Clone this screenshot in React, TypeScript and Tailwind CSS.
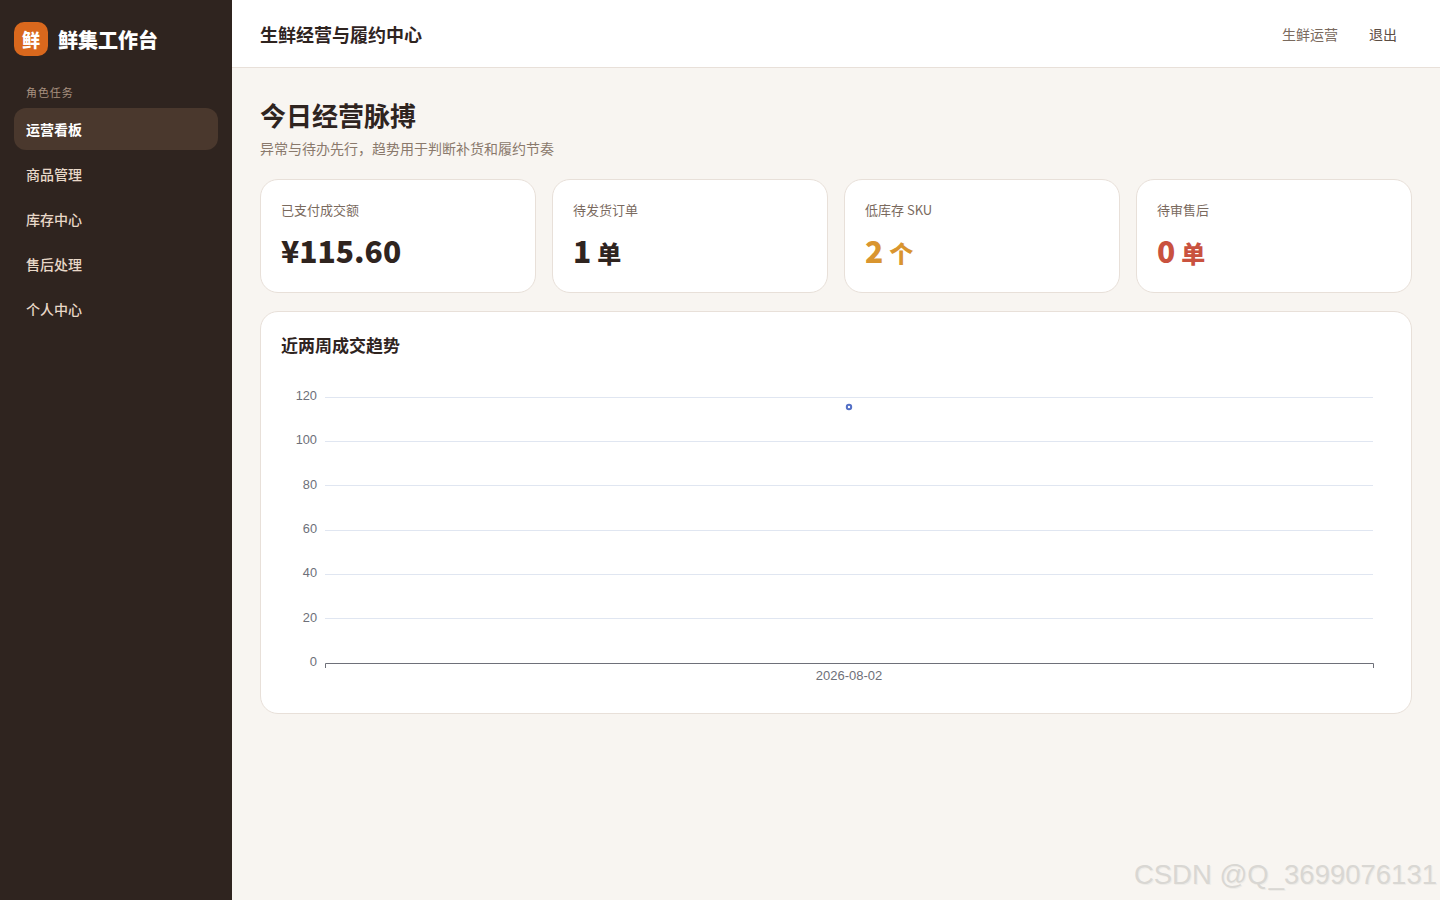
const fontStack = '[font-family:"Noto_Sans_CJK_SC","Noto_Sans",sans-serif]';

const navItems = ["运营看板", "商品管理", "库存中心", "售后处理", "个人中心"];

const stats = [
  { label: "已支付成交额", value: "¥115.60", unit: "", color: "text-[#2f241f]" },
  { label: "待发货订单", value: "1", unit: "单", color: "text-[#2f241f]" },
  { label: "低库存 SKU", value: "2", unit: "个", color: "text-[#d9952f]" },
  { label: "待审售后", value: "0", unit: "单", color: "text-[#c9523f]" },
];

const gridLines = [
  { label: "120", y: 26.5, textY: 28.5 },
  { label: "100", y: 70.5, textY: 72.5 },
  { label: "80", y: 114.5, textY: 117.5 },
  { label: "60", y: 159.5, textY: 161.5 },
  { label: "40", y: 203.5, textY: 205.5 },
  { label: "20", y: 247.5, textY: 250.5 },
];

function TrendChart() {
  return (
    <svg width="1110" height="320" viewBox="0 0 1110 320" className="mt-[13px] block">
      {gridLines.map((line) => (
        <g key={line.label}>
          <line x1="44" x2="1092" y1={line.y} y2={line.y} stroke="#e0e6f1" />
          <text x="36" y={line.textY} textAnchor="end" fontSize="12.8" fontFamily="Liberation Sans, sans-serif" fill="#6e7079">
            {line.label}
          </text>
        </g>
      ))}
      <text x="36" y="295" textAnchor="end" fontSize="13" fontFamily="Liberation Sans, sans-serif" fill="#6e7079">
        0
      </text>
      <path d="M44.5 297V292.5H1092.5V297" fill="none" stroke="#6e7079" />
      <text x="568" y="309" textAnchor="middle" fontSize="13" fontFamily="Liberation Sans, sans-serif" fill="#6e7079">
        2026-08-02
      </text>
      <circle cx="568" cy="36" r="2.2" fill="#fff" stroke="#5470c6" strokeWidth="2" />
    </svg>
  );
}

export default function App() {
  return (
    <div className={`relative flex h-[900px] w-[1440px] overflow-hidden bg-[#f8f5f1] ${fontStack}`}>
      <aside className="flex w-[232px] shrink-0 flex-col bg-[#2f241f] px-[14px] pt-[22px]">
        <div className="flex items-center gap-[10px]">
          <div className="flex h-[34px] w-[34px] items-center justify-center rounded-[10px] bg-[#d9681d] text-lg font-extrabold text-white">
            鲜
          </div>
          <span className="relative top-px text-xl font-extrabold text-white">鲜集工作台</span>
        </div>
        <div className="mt-[21px] mb-px px-3 text-[11px] leading-[30px] tracking-[0.88px] text-[#a8917f]">角色任务</div>
        <nav className="flex flex-col gap-[3px]">
          {navItems.map((item, i) => (
            <div
              key={item}
              className={
                i === 0
                  ? "flex h-[42px] items-center rounded-xl bg-[#4a382d] px-3 text-sm font-bold text-white"
                  : "flex h-[42px] items-center rounded-xl px-3 text-sm font-medium text-[#e8d8c8]"
              }
            >
              {item}
            </div>
          ))}
        </nav>
      </aside>

      <div className="flex min-w-0 flex-1 flex-col">
        <header className="flex h-[68px] items-center justify-between border-b border-[#e8e0d9] bg-white pl-7 pr-[43px]">
          <span className="text-lg font-bold text-[#2f241f]">生鲜经营与履约中心</span>
          <div className="flex items-center gap-[31px] text-sm">
            <span className="text-[#7a6a5e]">生鲜运营</span>
            <span className="text-[#5c4d43]">退出</span>
          </div>
        </header>

        <main className="flex flex-col px-7 pt-[27px]">
          <h1 className="text-[26px] leading-[40px] font-bold text-[#2f241f]">今日经营脉搏</h1>
          <p className="mt-[3px] text-sm leading-[20px] text-[#8a796c]">异常与待办先行，趋势用于判断补货和履约节奏</p>

          <div className="mt-[21px] grid grid-cols-4 gap-4">
            {stats.map((stat) => (
              <div key={stat.label} className="h-[114px] rounded-[18px] border border-[#e8e0d9] bg-white px-5 pt-5">
                <div className="text-[13px] leading-[20px] text-[#7a6a5e]">{stat.label}</div>
                <div className={`mt-[8px] flex items-baseline gap-[6px] text-[30px] leading-[44px] font-black ${stat.color}`}>
                  <span>{stat.value}</span>
                  {stat.unit && <span className="text-2xl">{stat.unit}</span>}
                </div>
              </div>
            ))}
          </div>

          <section className="mt-[18px] h-[403px] rounded-[18px] border border-[#e8e0d9] bg-white px-5 pt-5">
            <h2 className="text-[17px] leading-[26px] font-bold text-[#2f241f]">近两周成交趋势</h2>
            <TrendChart />
          </section>
        </main>
      </div>

      <div className="absolute right-[3px] bottom-[7px] [font-family:'Liberation_Sans',sans-serif] text-[27.5px] leading-[36px] text-[#d9d7d3] [text-shadow:1px_1px_0_#eeece8]">
        CSDN @Q_3699076131
      </div>
    </div>
  );
}
